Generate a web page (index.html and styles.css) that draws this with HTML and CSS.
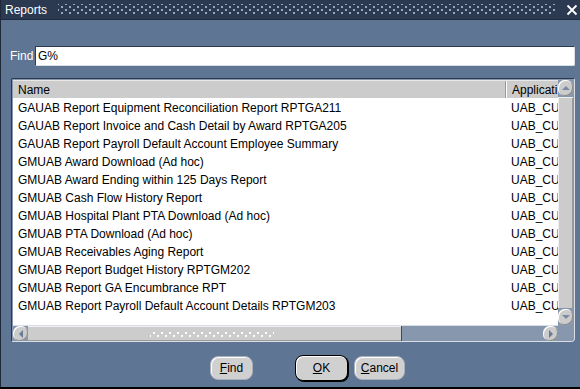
FILE: index.html
```html
<!DOCTYPE html>
<html lang="en">
<head>
    <meta charset="UTF-8">
    <title>Reports</title>
    <link rel="stylesheet" href="styles.css">
</head>
<body>
    <div class="window">
        <div class="titlebar">
            <span class="title">Reports</span>
            <div class="grip"></div>
            <span class="close">
                <svg width="12" height="12" viewBox="0 0 12 12"><path d="M1.5 1.5 L10.5 10.5 M10.5 1.5 L1.5 10.5" stroke="#fff" stroke-width="1.8"/></svg>
            </span>
        </div>

        <div class="content">
            <div class="find-row">
                <label for="find">Find</label>
                <input type="text" id="find" value="G%">
            </div>

            <div class="panel">
                <div class="list">
                    <div class="row head">
                        <div class="col-name">Name</div>
                        <div class="col-app">Applicati</div>
                    </div>
                    <div class="row"><div class="col-name">GAUAB Report Equipment Reconciliation Report RPTGA211</div><div class="col-app">UAB_CU</div></div>
                    <div class="row"><div class="col-name">GAUAB Report Invoice and Cash Detail by Award RPTGA205</div><div class="col-app">UAB_CU</div></div>
                    <div class="row"><div class="col-name">GAUAB Report Payroll Default Account Employee Summary</div><div class="col-app">UAB_CU</div></div>
                    <div class="row"><div class="col-name">GMUAB Award Download (Ad hoc)</div><div class="col-app">UAB_CU</div></div>
                    <div class="row"><div class="col-name">GMUAB Award Ending within 125 Days Report</div><div class="col-app">UAB_CU</div></div>
                    <div class="row"><div class="col-name">GMUAB Cash Flow History Report</div><div class="col-app">UAB_CU</div></div>
                    <div class="row"><div class="col-name">GMUAB Hospital Plant PTA Download (Ad hoc)</div><div class="col-app">UAB_CU</div></div>
                    <div class="row"><div class="col-name">GMUAB PTA Download (Ad hoc)</div><div class="col-app">UAB_CU</div></div>
                    <div class="row"><div class="col-name">GMUAB Receivables Aging Report</div><div class="col-app">UAB_CU</div></div>
                    <div class="row"><div class="col-name">GMUAB Report Budget History RPTGM202</div><div class="col-app">UAB_CU</div></div>
                    <div class="row"><div class="col-name">GMUAB Report GA Encumbrance RPT</div><div class="col-app">UAB_CU</div></div>
                    <div class="row"><div class="col-name">GMUAB Report Payroll Default Account Details RPTGM203</div><div class="col-app">UAB_CU</div></div>
                </div>

                <div class="vscroll">
                    <div class="arrow up">
                        <svg width="10" height="6" viewBox="0 0 10 6"><path d="M1 5 L5 1 L9 5 Z" fill="#7a8aa2"/></svg>
                    </div>
                    <div class="vthumb"></div>
                    <div class="arrow down">
                        <svg width="10" height="6" viewBox="0 0 10 6"><path d="M1 1 L9 1 L5 5 Z" fill="#7a8aa2"/></svg>
                    </div>
                </div>

                <div class="hscroll">
                    <div class="arrow left">
                        <svg width="6" height="10" viewBox="0 0 6 10"><path d="M5 1 L1 5 L5 9 Z" fill="#6a7a92"/></svg>
                    </div>
                    <div class="hthumb"><div class="dots"></div></div>
                    <div class="htrack"></div>
                    <div class="arrow right">
                        <svg width="6" height="10" viewBox="0 0 6 10"><path d="M1 1 L5 5 L1 9 Z" fill="#6a7a92"/></svg>
                    </div>
                </div>
                <div class="corner"></div>
            </div>

            <div class="buttons">
                <button class="btn btn-find"><u>F</u>ind</button>
                <button class="btn btn-ok"><u>O</u>K</button>
                <button class="btn btn-cancel"><u>C</u>ancel</button>
            </div>
        </div>
    </div>
</body>
</html>
```

FILE: styles.css
```css
body {
    margin: 0;
    padding: 0;
    font-family: "Liberation Sans", Arial, sans-serif;
    font-size: 12px;
    background-color: #000;
}

.window {
    width: 580px;
    height: 387px;
    display: flex;
    flex-direction: column;
    background-color: #5f7594;
    border-left: 1px solid #1e2a3a;
    box-sizing: border-box;
}

.titlebar {
    height: 19px;
    display: flex;
    align-items: center;
    background-color: #2b3a50;
    border-bottom: 1px solid #1f2c3d;
    color: #fff;
}

.title {
    padding-left: 4px;
    font-size: 12px;
    width: 53px;
}

.grip {
    flex: 1;
    height: 11px;
    margin-right: 8px;
    background-image:
        radial-gradient(circle, #9aa6b8 0.8px, transparent 1px),
        radial-gradient(circle, #9aa6b8 0.8px, transparent 1px);
    background-size: 8px 6px;
    background-position: 0 0, 4px 3px;
}

.close {
    width: 16px;
    height: 12px;
    display: flex;
    justify-content: center;
}

.content {
    flex: 1;
    display: flex;
    flex-direction: column;
    padding: 26px 5px 0 9px;
}

.find-row {
    display: flex;
    align-items: center;
    height: 20px;
    color: #fff;
    font-size: 12px;
}

.find-row label {
    width: 25px;
}

.find-row input {
    flex: 1;
    height: 20px;
    box-sizing: border-box;
    margin: 0;
    padding: 0 2px;
    border: 1px solid #2b3a50;
    border-right-color: #d8dde6;
    border-bottom-color: #d8dde6;
    border-radius: 0 2px 2px 0;
    font-family: inherit;
    font-size: 12px;
    color: #000;
    background-color: #fff;
}

.panel {
    margin-top: 12px;
    margin-left: 1px;
    height: 264px;
    box-sizing: border-box;
    display: grid;
    grid-template-columns: 1fr 16px;
    grid-template-rows: 1fr 16px;
    background-color: #8797ae;
    border: 1px solid #2b3a50;
    border-right-color: #d8dde6;
    border-bottom-color: #d8dde6;
    border-radius: 2px 2px 4px 2px;
    padding: 1px 0 0 1px;
    overflow: hidden;
}

.list {
    background-color: #fff;
    overflow: hidden;
}

.row {
    display: flex;
    height: 18px;
    padding-top: 2px;
    box-sizing: border-box;
    align-items: center;
    white-space: nowrap;
    color: #000;
}

.row.head {
    height: 18px;
    padding-top: 0;
    background-color: #cccccc;
    border-top: 1px solid #e8e8e8;
}

.col-name {
    width: 493px;
    padding-left: 5px;
    box-sizing: border-box;
    overflow: hidden;
}

.col-app {
    flex: 1;
    padding-left: 5px;
    overflow: hidden;
}

.row.head .col-app {
    border-left: 1px solid #fff;
    height: 100%;
    display: flex;
    align-items: center;
}

.row.head .col-name {
    border-right: 1px solid #9a9a9a;
    height: 100%;
    display: flex;
    align-items: center;
}

.vscroll {
    display: flex;
    flex-direction: column;
    background-color: #8797ae;
}

.arrow {
    display: flex;
    align-items: center;
    justify-content: center;
    background-color: #cccccc;
    border-radius: 7px;
    box-shadow: inset 1px 1px 0 #ffffff, inset -1px -1px 0 #8a8a8a;
}

.vscroll .arrow {
    height: 16px;
    width: 15px;
}

.vthumb {
    flex: 1;
    margin: 1px 0;
    width: 15px;
    background-color: #cccccc;
    box-shadow: inset 1px 1px 0 #f0f0f0, inset -1px 0 0 #9a9a9a;
}

.hscroll {
    display: flex;
    background-color: #8797ae;
    border-top: 1px solid #d8dde6;
    box-sizing: border-box;
    height: 16px;
}

.hscroll .arrow {
    width: 15px;
    height: 15px;
}

.hthumb {
    width: 373px;
    background-color: #cccccc;
    box-shadow: inset 0 1px 0 #f0f0f0, inset 0 -1px 0 #9a9a9a;
    display: flex;
    align-items: center;
    justify-content: center;
}

.dots {
    width: 124px;
    height: 6px;
    margin-right: 6px;
    background-image:
        radial-gradient(circle, #ffffff 0.8px, transparent 1px),
        radial-gradient(circle, #ffffff 0.8px, transparent 1px);
    background-size: 8px 6px;
    background-position: 0 -1px, 4px 2px;
}

.htrack {
    flex: 1;
    border-left: 1px solid #3a4a60;
}

.corner {
    background-color: #8797ae;
}

.buttons {
    display: flex;
    justify-content: center;
    align-items: center;
    gap: 6px;
    padding-left: 30px;
    padding-top: 10px;
    height: 42px;
    box-sizing: border-box;
}

.btn {
    height: 24px;
    padding: 0;
    font-family: inherit;
    font-size: 12px;
    color: #000;
    background-color: #d0d0d0;
    border: 1px solid #a8b0bc;
    border-radius: 8px;
    box-shadow: inset 1px 1px 0 #ffffff;
}

.btn-find {
    width: 43px;
    margin-right: 36px;
}

.btn-ok {
    width: 53px;
    height: 26px;
    border: 1px solid #000;
    box-shadow: inset 1px 1px 0 #ffffff, 1px 1px 0 #000;
}

.btn-cancel {
    width: 51px;
}
```
